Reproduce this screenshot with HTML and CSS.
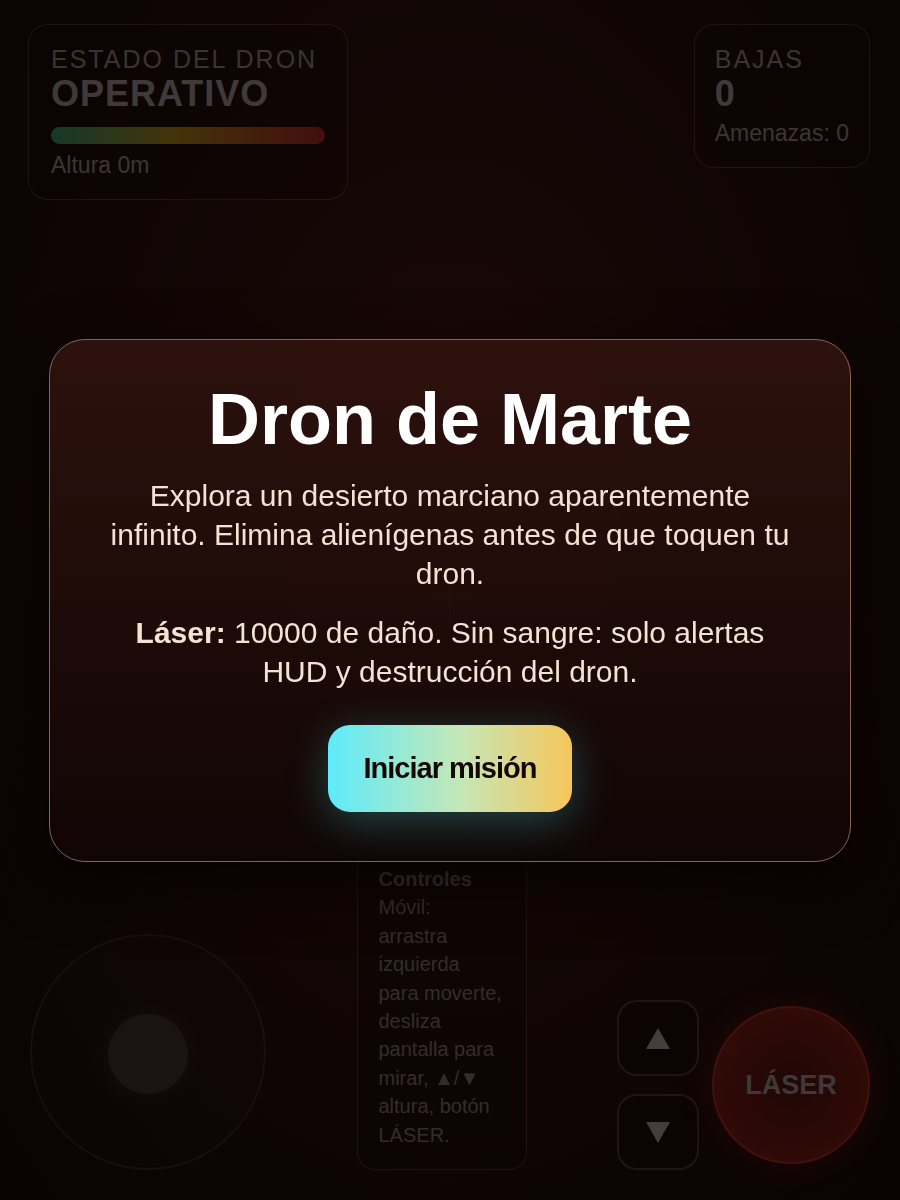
FILE: index.html
```html
<!DOCTYPE html>
<html lang="es">
<head>
  <meta charset="UTF-8" />
  <meta name="viewport" content="width=device-width, initial-scale=1.0" />
  <title>Dron de Marte</title>
  <link rel="stylesheet" href="styles.css">
</head>
<body>
  <div class="game">
    <div class="hud-top">
      <section class="card status">
        <div class="label">ESTADO DEL DRON</div>
        <div class="value">OPERATIVO</div>
        <div class="bar"></div>
        <div class="sub">Altura 0m</div>
      </section>
      <section class="card kills">
        <div class="label">BAJAS</div>
        <div class="value">0</div>
        <div class="sub kills-sub">Amenazas: 0</div>
      </section>
    </div>

    <div class="crosshair"></div>

    <div class="hud-bottom">
      <div class="joystick"><div class="knob"></div></div>
      <div class="card help">
        <strong>Controles</strong>
        <p>Móvil: arrastra izquierda para moverte, desliza pantalla para mirar, ▲/▼ altura, botón LÁSER.</p>
      </div>
      <div class="actions">
        <div class="alt-buttons">
          <button class="alt" aria-label="Subir">
            <svg width="24" height="21" viewBox="0 0 24 21"><polygon points="12,0 24,21 0,21"/></svg>
          </button>
          <button class="alt" aria-label="Bajar">
            <svg width="24" height="21" viewBox="0 0 24 21"><polygon points="0,0 24,0 12,21"/></svg>
          </button>
        </div>
        <button class="laser">LÁSER</button>
      </div>
    </div>
  </div>

  <div class="overlay">
    <div class="modal">
      <h1>Dron de Marte</h1>
      <p>Explora un desierto marciano aparentemente infinito. Elimina alienígenas antes de que toquen tu dron.</p>
      <p><strong>Láser:</strong> 10000 de daño. Sin sangre: solo alertas HUD y destrucción del dron.</p>
      <button class="start">Iniciar misión</button>
    </div>
  </div>
</body>
</html>
```

FILE: styles.css
```css
body {
  margin: 0;
  height: 100vh;
  overflow: hidden;
  font-family: "Liberation Sans", Arial, sans-serif;
  background: radial-gradient(ellipse at 50% 42%, #561f17 0%, #30130f 45%, #160909 100%);
  color: #ece0da;
}
.game {
  position: relative;
  height: 100vh;
  display: flex;
  flex-direction: column;
  justify-content: space-between;
}
.hud-top {
  display: flex;
  justify-content: space-between;
  align-items: flex-start;
  padding: 24px 30px 0 28px;
}
.card {
  border: 1.5px solid rgba(255, 190, 160, 0.3);
  border-radius: 20px;
  background: rgba(0, 0, 0, 0.15);
  padding: 19px 22px 20px;
}
.kills {
  padding: 19px 20px 20px;
}
.label {
  font-size: 25px;
  line-height: 30px;
  letter-spacing: 2px;
  color: #c4b4ae;
}
.value {
  font-size: 36px;
  line-height: 40px;
  font-weight: bold;
  letter-spacing: 1px;
  color: #d2c8c8;
}
.bar {
  width: 274px;
  height: 17px;
  margin: 13px 0 7px;
  border-radius: 9px;
  background: linear-gradient(90deg, #3ec98a, #e3b51e 45%, #e0302a);
}
.sub {
  font-size: 23px;
  line-height: 28px;
  color: #c8bab4;
}
.kills-sub {
  margin-top: 5px;
}
.crosshair {
  position: absolute;
  left: 428px;
  top: 578px;
  width: 44px;
  height: 44px;
}
.crosshair::before,
.crosshair::after {
  content: "";
  position: absolute;
  background: rgba(255, 220, 200, 0.45);
}
.crosshair::before {
  left: 21px;
  top: 0;
  width: 2px;
  height: 44px;
}
.crosshair::after {
  left: 0;
  top: 21px;
  width: 44px;
  height: 2px;
}
.hud-bottom {
  display: flex;
  justify-content: space-between;
  align-items: flex-end;
  padding: 0 30px 30px;
}
.joystick {
  width: 232px;
  height: 232px;
  border-radius: 50%;
  border: 2px solid rgba(255, 190, 180, 0.18);
  background: rgba(255, 255, 255, 0.02);
  display: flex;
  align-items: center;
  justify-content: center;
}
.knob {
  width: 80px;
  height: 80px;
  margin-top: 4px;
  border-radius: 50%;
  background: rgba(180, 195, 190, 0.27);
  box-shadow: 0 0 24px rgba(200, 220, 210, 0.15);
}
.help {
  width: 125px;
  padding: 12px 22px 20px 21px;
  border-radius: 18px;
  font-size: 20px;
  line-height: 28.4px;
  color: #a89a96;
}
.help strong {
  display: block;
  color: #b0a29e;
}
.help p {
  margin: 0;
}
.actions {
  display: flex;
  align-items: center;
  gap: 13px;
}
.alt-buttons {
  display: flex;
  flex-direction: column;
  gap: 18px;
}
.alt {
  width: 82px;
  height: 76px;
  border-radius: 20px;
  border: 2px solid rgba(255, 215, 205, 0.3);
  background: rgba(0, 0, 0, 0.2);
  padding: 0;
  display: flex;
  align-items: center;
  justify-content: center;
}
.alt svg {
  fill: #e0d8d8;
}
.laser {
  width: 158px;
  height: 158px;
  border-radius: 50%;
  border: 2px solid rgba(255, 80, 60, 0.6);
  background: radial-gradient(circle, rgba(140, 28, 18, 0.65) 0%, rgba(200, 42, 26, 0.88) 100%);
  box-shadow: 0 0 30px rgba(255, 50, 30, 0.3);
  color: #cfc4c4;
  font-family: "Liberation Sans", Arial, sans-serif;
  font-size: 27px;
  font-weight: bold;
  padding: 0;
}
.overlay {
  position: fixed;
  inset: 0;
  background: rgba(6, 2, 2, 0.72);
  display: flex;
  align-items: center;
  justify-content: center;
}
.modal {
  width: 700px;
  padding: 40px 50px 49px;
  border: 1.5px solid #856550;
  border-radius: 36px;
  background: linear-gradient(180deg, rgba(48, 19, 14, 0.9), rgba(16, 6, 5, 0.9));
  box-shadow: 0 20px 60px rgba(0, 0, 0, 0.6);
  text-align: center;
}
.modal h1 {
  margin: 0 0 17px;
  font-size: 72px;
  line-height: 79px;
  font-weight: bold;
  color: #fff;
}
.modal p {
  margin: 0 0 20px;
  font-size: 30px;
  line-height: 39px;
  color: #f4e2d2;
}
.start {
  margin-top: 14px;
  width: 244px;
  height: 87px;
  border: none;
  border-radius: 22px;
  background: linear-gradient(90deg, #5eebfa, #c6e7b6 55%, #f6c65a);
  box-shadow: 0 10px 44px rgba(70, 215, 225, 0.3);
  color: #140806;
  font-family: "Liberation Sans", Arial, sans-serif;
  font-size: 29px;
  font-weight: bold;
  letter-spacing: -1px;
}
```
